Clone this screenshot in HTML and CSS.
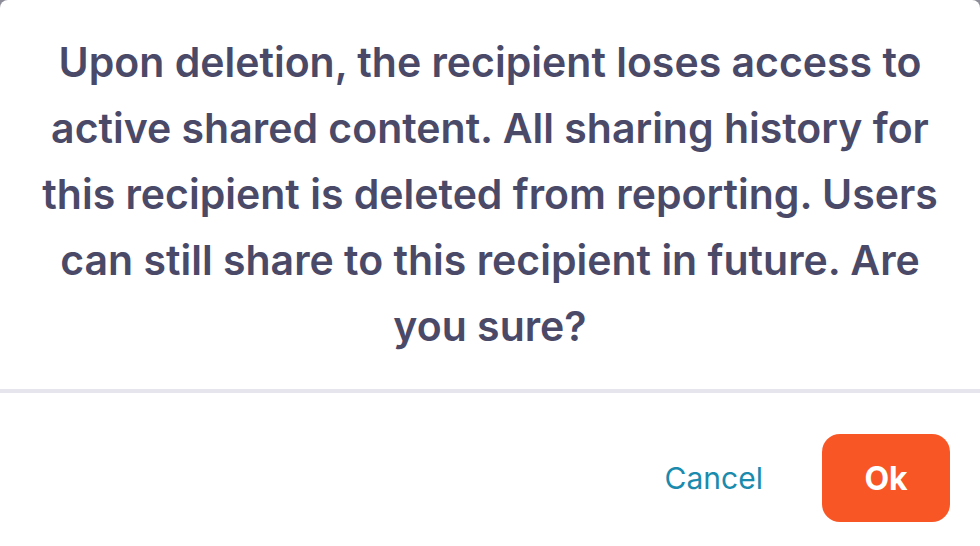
FILE: index.html
```html
<!DOCTYPE html>
<html lang="en">
<head>
<meta charset="utf-8">
<title>Delete recipient</title>
<link rel="stylesheet" href="styles.css">
</head>
<body>
<div class="dialog">
  <div class="dialog-body">
    <p class="message">Upon deletion, the recipient loses access to active shared content. All sharing history for this recipient is deleted from reporting. Users can still share to this recipient in future. Are you sure?</p>
  </div>
  <div class="dialog-footer">
    <button class="btn-cancel" type="button">Cancel</button>
    <button class="btn-ok" type="button">Ok</button>
  </div>
</div>
</body>
</html>
```
FILE: styles.css
```css
html, body {
  margin: 0;
  padding: 0;
  background: #8d8d99;
  height: 100%;
}
body {
  font-family: Inter, "Noto Sans", "Liberation Sans", sans-serif;
}
.dialog {
  background: #ffffff;
  border-radius: 8px 8px 0 0;
  height: 546px;
  box-sizing: border-box;
  display: flex;
  flex-direction: column;
}
.dialog-body {
  padding: 29px 38px 30px;
  border-bottom: 4px solid #e6e5ee;
}
.message {
  margin: 0;
  text-align: center;
  font-size: 41px;
  line-height: 66px;
  font-weight: 600;
  color: #4a4a68;
}
.dialog-footer {
  display: flex;
  justify-content: flex-end;
  align-items: center;
  gap: 59px;
  padding: 41px 30px 23px;
}
.btn-cancel {
  background: none;
  border: none;
  padding: 0;
  font-family: inherit;
  font-size: 30px;
  font-weight: 400;
  color: #1a8bad;
  cursor: pointer;
}
.btn-ok {
  width: 128px;
  height: 88px;
  border: none;
  border-radius: 18px;
  background: #f95625;
  color: #ffffff;
  font-family: inherit;
  font-size: 32px;
  font-weight: 700;
  cursor: pointer;
}
```
